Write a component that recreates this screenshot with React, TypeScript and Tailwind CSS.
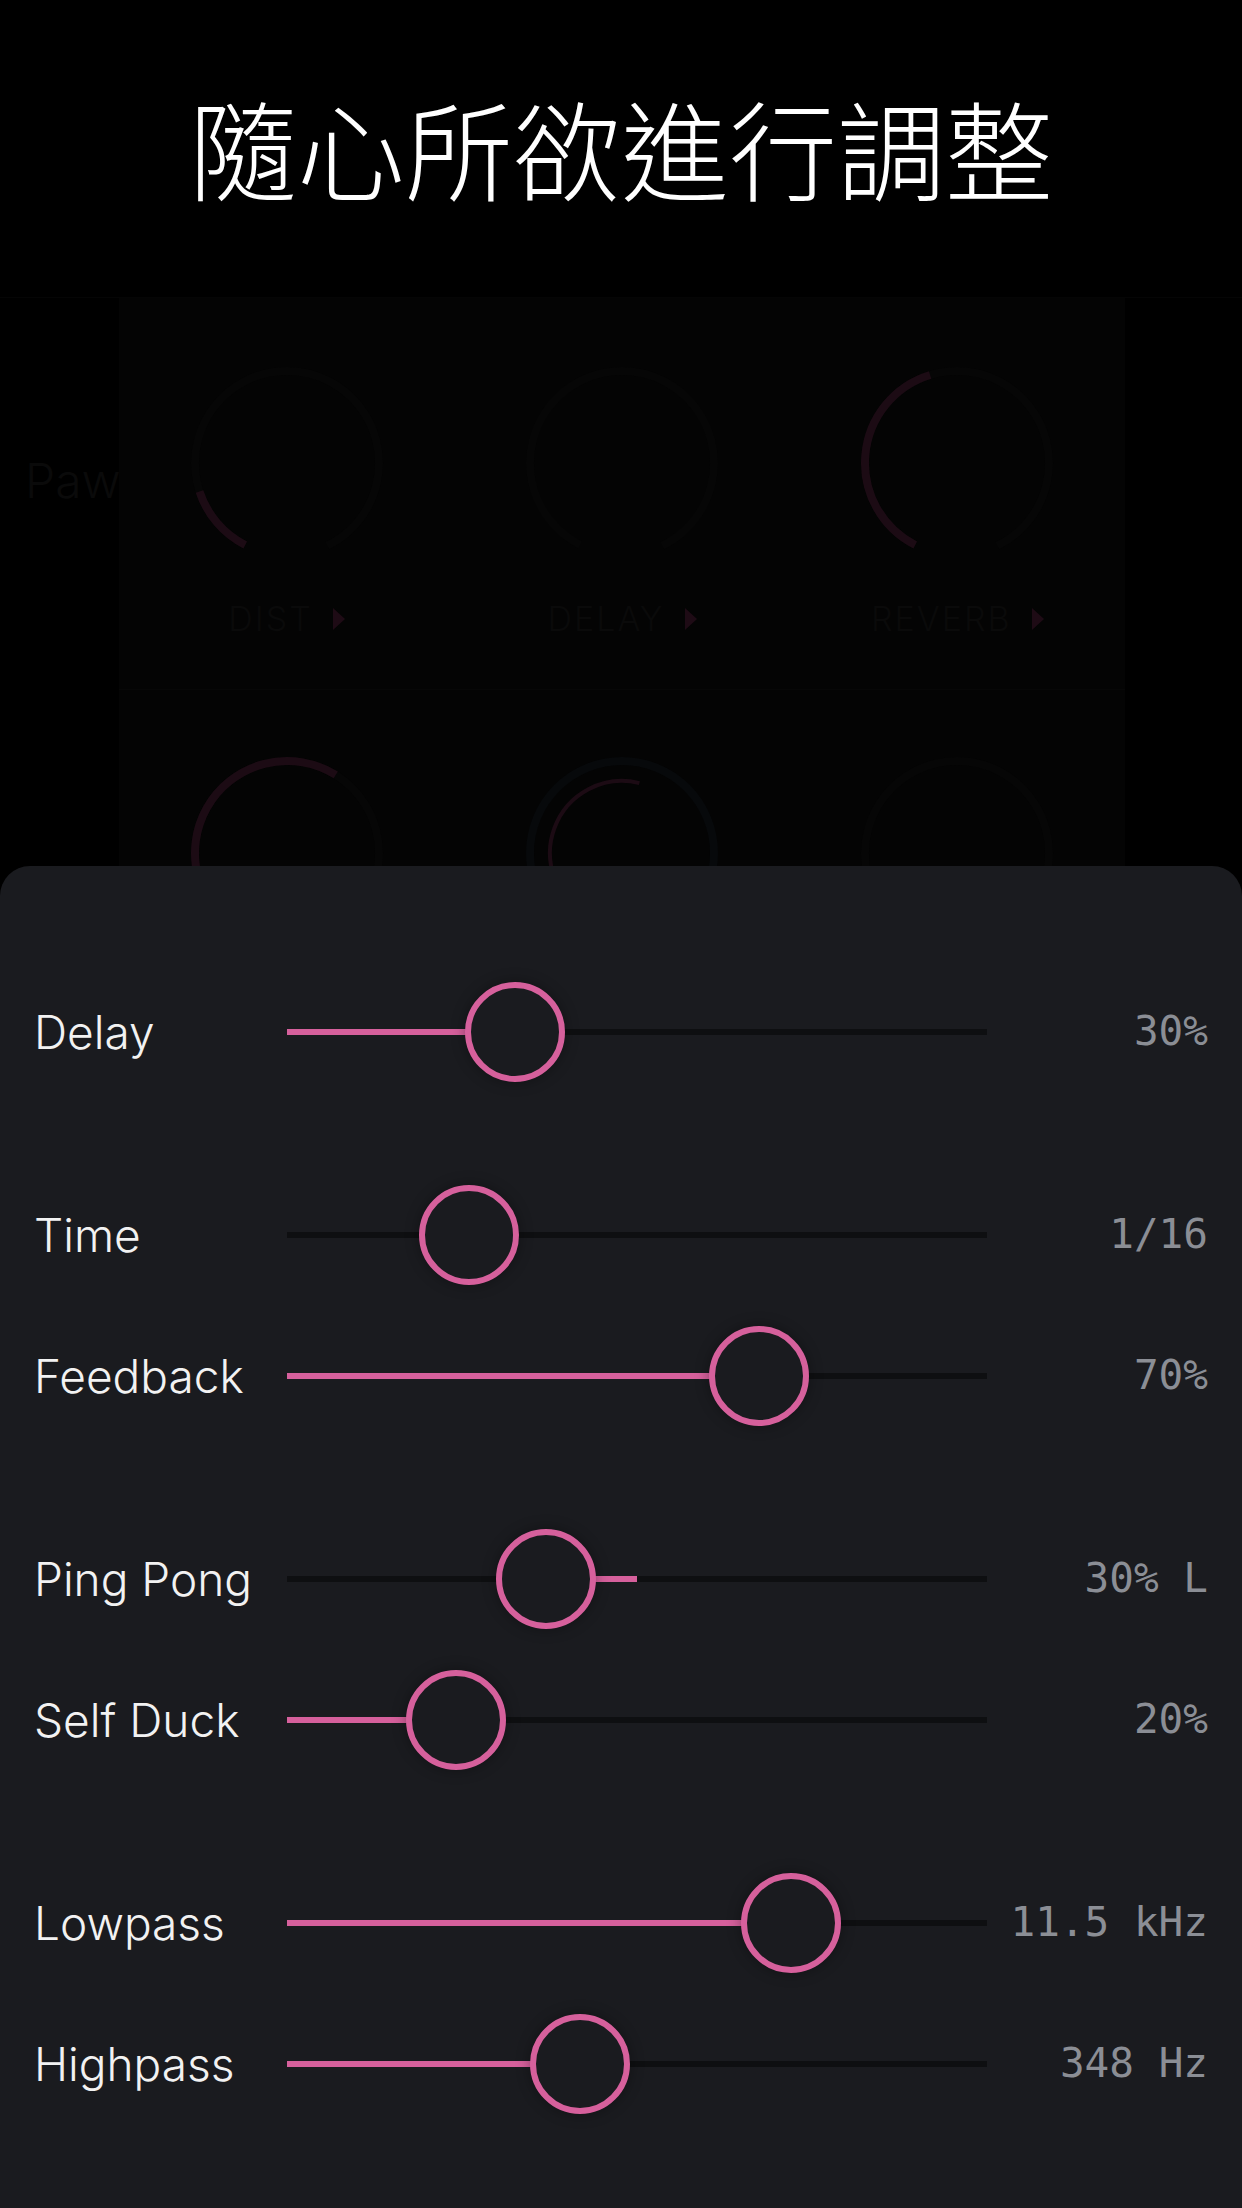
import React from 'react';

const PINK = '#d6609c';

// angles are degrees, clockwise from 12 o'clock
function arcPath(r: number, a0: number, a1: number) {
  const cx = 100;
  const cy = 100;
  const rad = (a: number) => (a * Math.PI) / 180;
  const x0 = cx + r * Math.sin(rad(a0));
  const y0 = cy - r * Math.cos(rad(a0));
  const x1 = cx + r * Math.sin(rad(a1));
  const y1 = cy - r * Math.cos(rad(a1));
  const large = a1 - a0 > 180 ? 1 : 0;
  return `M ${x0} ${y0} A ${r} ${r} 0 ${large} 1 ${x1} ${y1}`;
}

type KnobProps = {
  value?: number; // end angle of the value arc
  inner?: number;
  full?: boolean;
};

function Knob({ value, inner, full }: KnobProps) {
  return (
    <svg width="200" height="200" viewBox="0 0 200 200">
      {full ? (
        <circle cx="100" cy="100" r="92" fill="none" stroke="#07090b" strokeWidth="8" />
      ) : (
        <path d={arcPath(92, 207, 514)} fill="none" stroke="#060606" strokeWidth="8" />
      )}
      {value !== undefined && (
        <path d={arcPath(92, 207, value)} fill="none" stroke="#1c0b14" strokeWidth="8" />
      )}
      {inner !== undefined && (
        <path d={arcPath(72, 207, inner)} fill="none" stroke="#1c0b14" strokeWidth="4" />
      )}
    </svg>
  );
}

function KnobLabel({ text }: { text: string }) {
  return (
    <div className="flex items-center justify-center gap-[20px] h-[40px]">
      <span className="text-[34px] font-light tracking-[0.06em] text-[#0a0a0a] leading-none" style={{ fontFamily: 'Inter, "Noto Sans", sans-serif' }}>
        {text}
      </span>
      <svg width="12" height="22" viewBox="0 0 12 22">
        <polygon points="0,0 12,11 0,22" fill="#1e0b15" />
      </svg>
    </div>
  );
}

type SliderRow = {
  label: string;
  value: string;
  pos: number; // thumb centre, px from track start
  centered?: boolean;
};

const groups: SliderRow[][] = [
  [{ label: 'Delay', value: '30%', pos: 228 }],
  [
    { label: 'Time', value: '1/16', pos: 182, centered: true },
    { label: 'Feedback', value: '70%', pos: 472 },
  ],
  [
    { label: 'Ping Pong', value: '30% L', pos: 259, centered: true },
    { label: 'Self Duck', value: '20%', pos: 169 },
  ],
  [
    { label: 'Lowpass', value: '11.5 kHz', pos: 504 },
    { label: 'Highpass', value: '348 Hz', pos: 293 },
  ],
];

function Slider({ row }: { row: SliderRow }) {
  const TRACK = 700;
  const mid = TRACK / 2;
  let fillLeft = 0;
  let fillWidth = row.pos;
  if (row.centered) {
    if (row.label === 'Time') {
      fillWidth = 0;
    } else {
      fillLeft = Math.min(row.pos, mid);
      fillWidth = Math.abs(mid - row.pos);
    }
  }
  return (
    <div className="flex items-center h-[141px] px-[34px]">
      <div className="w-[253px] text-[46px] font-light text-[#f2f2f2] leading-none" style={{ fontFamily: 'Inter, "Noto Sans", sans-serif' }}>
        {row.label}
      </div>
      <div className="relative w-[700px] h-[6px] bg-[#0e0f11]">
        {fillWidth > 0 && (
          <div className="absolute top-0 h-[6px]" style={{ left: fillLeft, width: fillWidth, background: PINK }} />
        )}
        <div
          className="absolute top-[-47px] w-[100px] h-[100px] rounded-full border-[6px] border-[#d6609c] bg-[#1a1b1f] shadow-[0_0_14px_rgba(0,0,0,0.35)]"
          style={{ left: row.pos - 50 }}
        />
      </div>
      <div
        className="flex-1 text-right text-[41px] text-[#8b8e95] leading-none whitespace-pre"
        style={{ fontFamily: '"DejaVu Sans Mono", "Liberation Mono", monospace' }}
      >
        {row.value}
      </div>
    </div>
  );
}

export default function App() {
  return (
    <div className="w-[1242px] h-[2208px] bg-black overflow-hidden flex flex-col">
      <header className="h-[297px] pt-[92px]">
        <h1
          className="text-center text-[108px] leading-none text-white font-light"
          style={{ fontFamily: '"Noto Sans CJK TC", "Noto Sans CJK SC", sans-serif' }}
        >
          隨心所欲進行調整
        </h1>
      </header>

      {/* dimmed plugin view behind the sheet */}
      <div className="h-[569px] flex bg-black border-t border-[#050505]">
        <div className="w-[119px] overflow-hidden pt-[147px]">
          <span className="text-[48px] font-light text-[#0a0a0a] whitespace-nowrap pl-[25px]" style={{ fontFamily: 'Inter, sans-serif' }}>
            Paw
          </span>
        </div>
        <div className="w-[1006px] bg-[#040404] flex flex-col">
          <div className="h-[392px] grid grid-cols-3 border-b border-[#070707]">
            <div className="flex flex-col items-center pt-[65px]">
              <Knob value={252} />
              <div className="mt-[36px]"><KnobLabel text="DIST" /></div>
            </div>
            <div className="flex flex-col items-center pt-[65px]">
              <Knob />
              <div className="mt-[36px]"><KnobLabel text="DELAY" /></div>
            </div>
            <div className="flex flex-col items-center pt-[65px]">
              <Knob value={343} />
              <div className="mt-[36px]"><KnobLabel text="REVERB" /></div>
            </div>
          </div>
          <div className="flex-1 grid grid-cols-3 overflow-hidden">
            <div className="flex flex-col items-center pt-[63px]">
              <Knob value={392} />
            </div>
            <div className="flex flex-col items-center pt-[63px]">
              <Knob full inner={374} />
            </div>
            <div className="flex flex-col items-center pt-[63px]">
              <Knob />
            </div>
          </div>
        </div>
        <div className="flex-1" />
      </div>

      {/* settings sheet */}
      <div className="flex-1 bg-[#1a1b1f] rounded-t-[30px] pt-[95px]">
        {groups.map((g, i) => (
          <div key={i} className={i > 0 ? 'mt-[62px]' : ''}>
            {g.map((row) => (
              <Slider key={row.label} row={row} />
            ))}
          </div>
        ))}
      </div>
    </div>
  );
}
